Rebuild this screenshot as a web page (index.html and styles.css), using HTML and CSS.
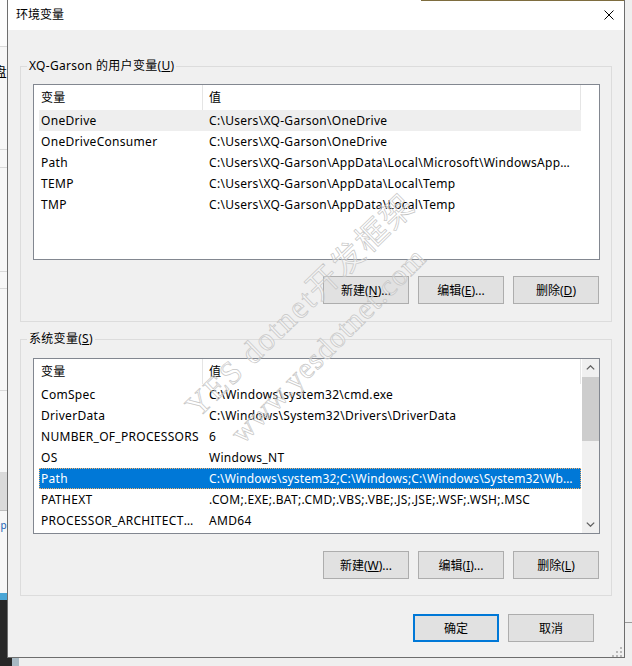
FILE: index.html
```html
<!DOCTYPE html>
<html lang="zh-CN">
<head>
<meta charset="utf-8">
<title>环境变量</title>
<link rel="stylesheet" href="styles.css">
</head>
<body>
<div class="screen">
  <div class="bg-window-left">
    <div class="bw-row bw-top">方式。</div>
    <div class="bw-row bw-text">磁盘</div>
    <div class="bw-row bw-r1"></div>
    <div class="bw-row bw-r2"></div>
    <div class="bw-row bw-r3"></div>
    <div class="bw-row bw-r4"></div>
    <div class="bw-row bw-r5"></div>
    <div class="bw-row bw-gray"></div>
    <div class="bw-row bw-link">a=p</div>
  </div>
  <div class="bg-taskbar"></div>
  <div class="bg-strip"></div>
  <div class="bg-right-line"></div>

  <div class="dialog">
    <div class="titlebar">
      <span class="title">环境变量</span>
      <svg class="close" width="10" height="10" viewBox="0 0 10 10"><path d="M0.5 0.5 L9.5 9.5 M9.5 0.5 L0.5 9.5" stroke="#000" stroke-width="1" fill="none"/></svg>
    </div>
    <div class="content">
      <div class="group group-user">
        <div class="legend">XQ-Garson 的用户变量(<u>U</u>)</div>
        <div class="listview">
          <div class="lv-main">
            <div class="lv-header">
              <div class="hcell c1">变量</div>
              <div class="hcell c2">值</div>
            </div>
            <div class="rows">
              <div class="row hot"><div class="cell1">OneDrive</div><div class="cell2">C:\Users\XQ-Garson\OneDrive</div></div>
              <div class="row"><div class="cell1">OneDriveConsumer</div><div class="cell2">C:\Users\XQ-Garson\OneDrive</div></div>
              <div class="row"><div class="cell1">Path</div><div class="cell2">C:\Users\XQ-Garson\AppData\Local\Microsoft\WindowsApps;C:\Users\XQ-Garson\AppData\Local\Programs</div></div>
              <div class="row"><div class="cell1">TEMP</div><div class="cell2">C:\Users\XQ-Garson\AppData\Local\Temp</div></div>
              <div class="row"><div class="cell1">TMP</div><div class="cell2">C:\Users\XQ-Garson\AppData\Local\Temp</div></div>
            </div>
          </div>
        </div>
        <div class="btn-row">
          <button class="btn">新建(<u>N</u>)...</button>
          <button class="btn">编辑(<u>E</u>)...</button>
          <button class="btn">删除(<u>D</u>)</button>
        </div>
      </div>

      <div class="group group-sys">
        <div class="legend">系统变量(<u>S</u>)</div>
        <div class="listview">
          <div class="lv-main">
            <div class="lv-header">
              <div class="hcell c1">变量</div>
              <div class="hcell c2">值</div>
            </div>
            <div class="rows">
              <div class="row"><div class="cell1">ComSpec</div><div class="cell2">C:\Windows\system32\cmd.exe</div></div>
              <div class="row"><div class="cell1">DriverData</div><div class="cell2">C:\Windows\System32\Drivers\DriverData</div></div>
              <div class="row"><div class="cell1">NUMBER_OF_PROCESSORS</div><div class="cell2">6</div></div>
              <div class="row"><div class="cell1">OS</div><div class="cell2">Windows_NT</div></div>
              <div class="row sel"><div class="cell1">Path</div><div class="cell2 tight">C:\Windows\system32;C:\Windows;C:\Windows\System32\Wbem;C:\Windows\System32\WindowsPowerShell</div></div>
              <div class="row"><div class="cell1">PATHEXT</div><div class="cell2">.COM;.EXE;.BAT;.CMD;.VBS;.VBE;.JS;.JSE;.WSF;.WSH;.MSC</div></div>
              <div class="row"><div class="cell1">PROCESSOR_ARCHITECTURE</div><div class="cell2">AMD64</div></div>
            </div>
          </div>
          <div class="scrollbar">
            <div class="sb-btn"><svg width="9" height="5" viewBox="0 0 9 5"><path d="M0.8 4.4 L4.5 0.8 L8.2 4.4" stroke="#606060" stroke-width="1.3" fill="none"/></svg></div>
            <div class="sb-thumb"></div>
            <div class="sb-track"></div>
            <div class="sb-btn"><svg width="9" height="5" viewBox="0 0 9 5"><path d="M0.8 0.6 L4.5 4.2 L8.2 0.6" stroke="#606060" stroke-width="1.3" fill="none"/></svg></div>
          </div>
        </div>
        <div class="btn-row">
          <button class="btn">新建(<u>W</u>)...</button>
          <button class="btn">编辑(<u>I</u>)...</button>
          <button class="btn">删除(<u>L</u>)</button>
        </div>
      </div>

      <div class="dlg-buttons">
        <button class="btn default">确定</button>
        <button class="btn">取消</button>
      </div>
      <div class="grip-row">
        <svg width="10" height="10" viewBox="0 0 10 10" fill="#b8b8b8"><rect x="8" y="0" width="2" height="2"/><rect x="4" y="4" width="2" height="2"/><rect x="8" y="4" width="2" height="2"/><rect x="0" y="8" width="2" height="2"/><rect x="4" y="8" width="2" height="2"/><rect x="8" y="8" width="2" height="2"/></svg>
      </div>
    </div>

    <div class="watermark wm1">YES dotnet开发框架</div>
    <div class="watermark wm2">www.yesdotnet.com</div>
  </div>
</div>
</body>
</html>
```
FILE: styles.css
```css
* { box-sizing: border-box; }
html, body { margin: 0; padding: 0; }
body {
  width: 632px;
  height: 666px;
  overflow: hidden;
  font-family: "Noto Sans", "Noto Sans CJK SC", sans-serif;
  font-size: 12px;
  letter-spacing: 0.3px;
  color: #000;
}
.screen {
  position: relative;
  width: 632px;
  height: 666px;
  background: #efefef;
  overflow: hidden;
}

/* background windows peeking out */
.bg-window-left {
  position: absolute;
  left: -120px;
  top: 0;
  width: 127px;
  height: 593px;
  background: #f7f7f7;
  display: flex;
  flex-direction: column;
  overflow: hidden;
}
.bw-row { flex: none; text-align: right; white-space: nowrap; border-bottom: 1px solid #d9d9d9; }
.bw-top { height: 47px; line-height: 30px; background: #fcfcfc; font-size: 13px; }
.bw-text { height: 103px; line-height: 48px; font-size: 13px; }
.bw-r1 { height: 18px; }
.bw-r2 { height: 104px; }
.bw-r3 { height: 17px; }
.bw-r4 { height: 102px; }
.bw-r5 { height: 82px; }
.bw-gray { height: 38px; background: #dadada; border-bottom: 1px solid #bdbdbd; }
.bw-link { flex: 1; border: 0; color: #1a5fb4; font-size: 10px; line-height: 16px; padding-top: 6px; }

.bg-taskbar {
  position: absolute;
  left: 0;
  top: 593px;
  width: 12px;
  height: 73px;
  background: #272727;
  border-top: 7px solid #4aa6d6;
}
.bg-strip {
  position: absolute;
  left: 12px;
  top: 600px;
  width: 7px;
  height: 66px;
  background: #a8b9c3;
}
.bg-right-line {
  position: absolute;
  left: 625px;
  top: 622px;
  width: 7px;
  height: 1px;
  background: #9a9a9a;
}

/* dialog */
.dialog {
  position: relative;
  margin-left: 7px;
  width: 618px;
  height: 658px;
  border: 1px solid #6d6d6d;
  border-top: 0;
  background: #f0f0f0;
  display: flex;
  flex-direction: column;
  overflow: hidden;
}
.dialog::before {
  content: "";
  position: absolute;
  top: 0;
  left: 413px;
  right: 0;
  height: 1px;
  background: #7e6d3f;
}
.titlebar {
  flex: none;
  height: 30px;
  background: #fff;
  display: flex;
  align-items: center;
  justify-content: space-between;
  padding: 0 10px 0 8px;
}
.title { line-height: 16px; letter-spacing: 0; }
.close { display: block; }

.content {
  flex: 1;
  padding: 0 12px;
  display: flex;
  flex-direction: column;
}

.group {
  border: 1px solid #dcdcdc;
  padding: 0 11px 17px 12px;
  display: flex;
  flex-direction: column;
}
.group-user { margin-top: 36px; }
.group-sys { margin-top: 17px; padding-bottom: 16px; }

.legend {
  align-self: flex-start;
  margin: -9px 0 0 -6px;
  padding: 0 2px;
  background: #f0f0f0;
  line-height: 16px;
  white-space: nowrap;
}

.listview {
  margin-top: 10px;
  height: 176px;
  border: 1px solid #828790;
  background: #fff;
  display: flex;
  overflow: hidden;
}
.group-sys .listview { margin-top: 11px; }
.lv-main {
  flex: 1;
  min-width: 0;
  display: flex;
  flex-direction: column;
  overflow: hidden;
}
.lv-header { flex: none; height: 25px; display: flex; }
.hcell {
  line-height: 25px;
  border-right: 1px solid #e5e5e5;
  padding-left: 7px;
  white-space: nowrap;
}
.hcell.c1 { width: 169px; }
.hcell.c2 { width: 378px; padding-left: 6px; }

.rows { padding-left: 5px; }
.row {
  display: flex;
  width: 542px;
  height: 21px;
  line-height: 21px;
}
.cell1 {
  width: 164px;
  flex: none;
  padding: 0 4px 0 2px;
  overflow: hidden;
  white-space: nowrap;
  text-overflow: ellipsis;
}
.cell2 {
  flex: 1;
  min-width: 0;
  padding: 0 7px 0 6px;
  overflow: hidden;
  white-space: nowrap;
  text-overflow: ellipsis;
}
.cell2.tight { letter-spacing: 0.15px; padding-right: 5px; }
.row.hot { background: #eeeeee; }
.row.sel {
  background: #0078d7;
  color: #fff;
  outline: 1px dotted #f3b26c;
  outline-offset: -1px;
}

.scrollbar {
  flex: none;
  width: 17px;
  background: #f0f0f0;
  display: flex;
  flex-direction: column;
}
.sb-btn {
  flex: none;
  height: 17px;
  display: flex;
  align-items: center;
  justify-content: center;
}
.sb-btn svg { display: block; }
.sb-thumb { flex: none; margin-top: 1px; height: 64px; background: #cdcdcd; }
.sb-track { flex: 1; }

.btn-row {
  display: flex;
  justify-content: flex-end;
  gap: 9px;
  margin: 16px 1px 0 0;
}
.group-sys .btn-row { margin-top: 17px; }

.btn {
  width: 86px;
  height: 28px;
  padding: 0;
  margin: 0;
  background: #e1e1e1;
  border: 1px solid #adadad;
  border-radius: 0;
  font: inherit;
  color: #000;
  display: flex;
  align-items: center;
  justify-content: center;
  white-space: nowrap;
}
.btn.default { border: 2px solid #0078d7; }

.dlg-buttons {
  display: flex;
  justify-content: flex-end;
  gap: 9px;
  margin-top: 18px;
  padding-right: 18px;
}
.grip-row {
  display: flex;
  justify-content: flex-end;
  margin: 5px -10px 0 0;
}
.grip-row svg { display: block; }

/* watermark overlay */
.watermark {
  position: absolute;
  pointer-events: none;
  font-family: "Liberation Serif", "Noto Sans CJK SC", serif;
  font-size: 32px;
  line-height: 36px;
  white-space: nowrap;
  color: rgba(255, 255, 255, 0.25);
  -webkit-text-stroke: 0.7px #c6c6c6;
  transform-origin: 0 0;
  transform: rotate(-44deg);
  letter-spacing: 2px;
}
.wm1 { left: 170px; top: 398px; }
.wm2 { left: 215px; top: 425px; font-size: 30px; letter-spacing: 1px; transform: rotate(-45deg); }
```
